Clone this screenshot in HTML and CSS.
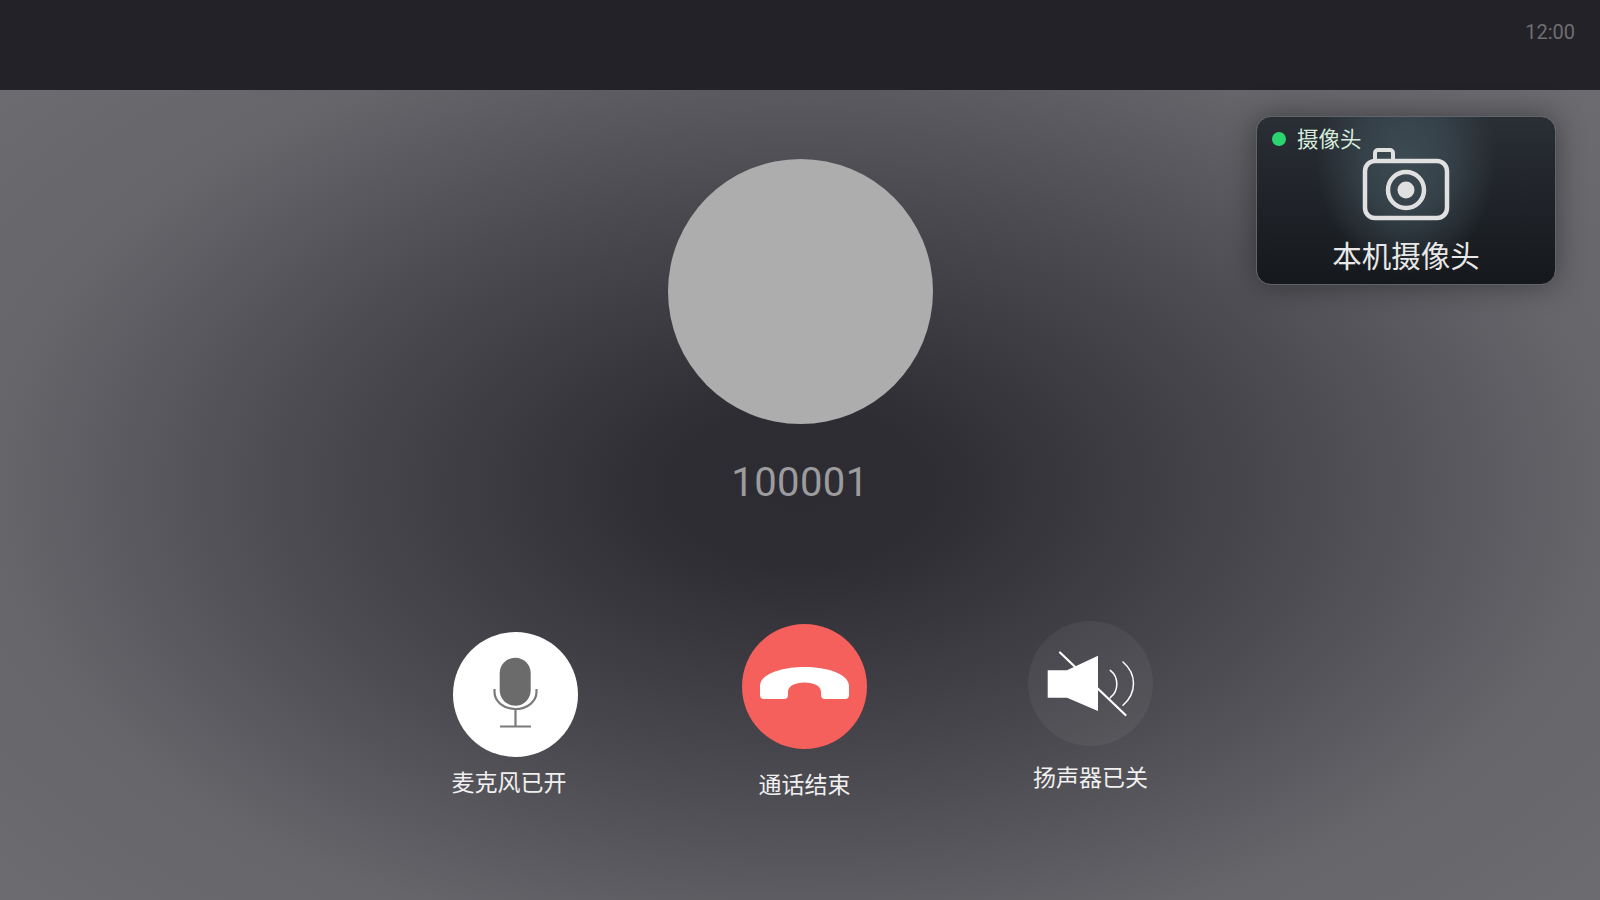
FILE: index.html
```html
<!DOCTYPE html>
<html lang="zh">

<head>
    <title>通话</title>
    <link rel="stylesheet" href="styles.css">
</head>

<body>
    <div class="topbar">
        <span class="clock">12:00</span>
    </div>

    <div class="call">
        <div class="camera-card">
            <div class="camera-head">
                <span class="camera-dot"></span>
                <span class="camera-tag">摄像头</span>
            </div>
            <svg class="camera-icon" width="90" height="76" viewBox="0 0 90 76">
                <path d="M14 16V7a3 3 0 0 1 3-3h12a3 3 0 0 1 3 3v9" fill="none" stroke="#e0e0e0" stroke-width="4"/>
                <rect x="4" y="15" width="82" height="57" rx="10" fill="none" stroke="#e0e0e0" stroke-width="4.500"/>
                <circle cx="45" cy="44" r="18" fill="none" stroke="#e0e0e0" stroke-width="4.500"/>
                <circle cx="45" cy="44" r="8.500" fill="#e0e0e0"/>
            </svg>
            <div class="camera-title">本机摄像头</div>
        </div>

        <div class="avatar"></div>
        <div class="number">100001</div>

        <div class="actions">
            <div class="action action-mic">
                <div class="action-btn btn-white">
                    <svg width="125" height="125" viewBox="0 0 125 125">
                        <rect x="46.700" y="25.700" width="31" height="48" rx="15.500" fill="#6b6b6b"/>
                        <path d="M41.500 57v3a21 17 0 0 0 42 0v-3M62.500 77v17M47 94.500h31" fill="none" stroke="#7a7a7a" stroke-width="2.200"/>
                    </svg>
                </div>
                <div class="action-label">麦克风已开</div>
            </div>
            <div class="action action-end">
                <div class="action-btn btn-red">
                    <svg width="125" height="125" viewBox="0 0 125 125">
                        <path d="M18 62C18 50 40 43 62.500 43S107 50 107 62v9a4 4 0 0 1-4 4H83a4 4 0 0 1-4-4v-3c0-6-7-9.500-16.500-9.500S46 62 46 68v3a4 4 0 0 1-4 4H22a4 4 0 0 1-4-4z" fill="#fff"/>
                    </svg>
                </div>
                <div class="action-label">通话结束</div>
            </div>
            <div class="action action-speaker">
                <div class="action-btn btn-dim">
                    <svg width="125" height="125" viewBox="0 0 125 125">
                        <path d="M19.700 49.300H39L70 34.700V90L39 76.700H19.700z" fill="#fff"/>
                        <path d="M32 31.500L97.500 94" fill="none" stroke="#fff" stroke-width="2.200" stroke-linecap="round"/>
                        <path d="M82.300 49.300C91 56 91 70 82.300 76.700M95 41C109 53 109 72 95 84.300" fill="none" stroke="#fff" stroke-width="1.500" stroke-linecap="round"/>
                    </svg>
                </div>
                <div class="action-label">扬声器已关</div>
            </div>
        </div>
    </div>
</body>

</html>
```

FILE: styles.css
```css
body {
    margin: 0;
    width: 1600px;
    height: 900px;
    overflow: hidden;
    font-family: "Noto Sans CJK SC", "Noto Sans", sans-serif;
    background-color: #55545a;
}

.topbar {
    height: 90px;
    display: flex;
    justify-content: flex-end;
    padding: 18px 25px 0 0;
    box-sizing: border-box;
    background-color: #232228;
}

.clock {
    font-family: Roboto, sans-serif;
    font-size: 20px;
    line-height: 28px;
    color: #6e6e72;
}

.call {
    position: relative;
    height: 810px;
    display: flex;
    flex-direction: column;
    align-items: center;
    background: radial-gradient(ellipse 1040px 611px at 50% 49%, #2d2c32 0%, #2e2d33 13%, #4b4a50 48%, #66656a 77%, #6c6b70 100%);
}

.camera-card {
    position: absolute;
    top: 26px;
    right: 44px;
    width: 300px;
    height: 169px;
    box-sizing: border-box;
    display: flex;
    flex-direction: column;
    align-items: center;
    border: 1px solid #5f6469;
    border-radius: 15px;
    background: radial-gradient(ellipse 90px 115px at 50% 25%, #3c4a52 0%, #36424a 45%, rgba(54, 66, 74, 0) 100%), linear-gradient(#2a2e35, #15191d);
    box-shadow: 0 0 30px rgba(0, 0, 0, 0.4);
}

.camera-head {
    align-self: stretch;
    height: 28px;
    padding: 7px 0 0 15px;
    display: flex;
    align-items: center;
    gap: 11px;
}

.camera-dot {
    width: 14px;
    height: 14px;
    margin-top: 2px;
    border-radius: 50%;
    background-color: #2bd46f;
}

.camera-tag {
    font-size: 21.500px;
    line-height: 28px;
    color: #d5ecdd;
}

.camera-icon {
    margin-top: -6px;
}

.camera-title {
    margin-top: 12px;
    font-size: 29.500px;
    line-height: 40px;
    color: #e8e8e8;
}

.avatar {
    width: 265px;
    height: 265px;
    margin-top: 69px;
    border-radius: 50%;
    background-color: #adadad;
}

.number {
    margin-top: 29px;
    font-family: Roboto, sans-serif;
    font-size: 40px;
    line-height: 60px;
    letter-spacing: 0.4px;
    color: #9c9c9f;
}

.actions {
    align-self: flex-start;
    margin: 108px 0 0 453px;
    display: grid;
    grid-template-columns: 289px 286px 125px;
    align-items: start;
}

.action {
    width: 125px;
}

.action-btn {
    width: 125px;
    height: 125px;
    border-radius: 50%;
}

.action-btn svg {
    display: block;
}

.btn-white {
    background-color: #fff;
}

.btn-red {
    background-color: #f55f5c;
}

.btn-dim {
    background-color: rgba(255, 255, 255, 0.05);
}

.action-label {
    font-size: 23px;
    line-height: 30px;
    text-align: center;
    white-space: nowrap;
    color: #f0f0f0;
}

.action-mic {
    margin-top: 11px;
}

.action-mic .action-label {
    margin: 9px 0 0 -13px;
}

.action-end {
    margin-top: 3px;
}

.action-end .action-label {
    margin-top: 19px;
}

.action-speaker .action-label {
    margin-top: 15px;
}
```
